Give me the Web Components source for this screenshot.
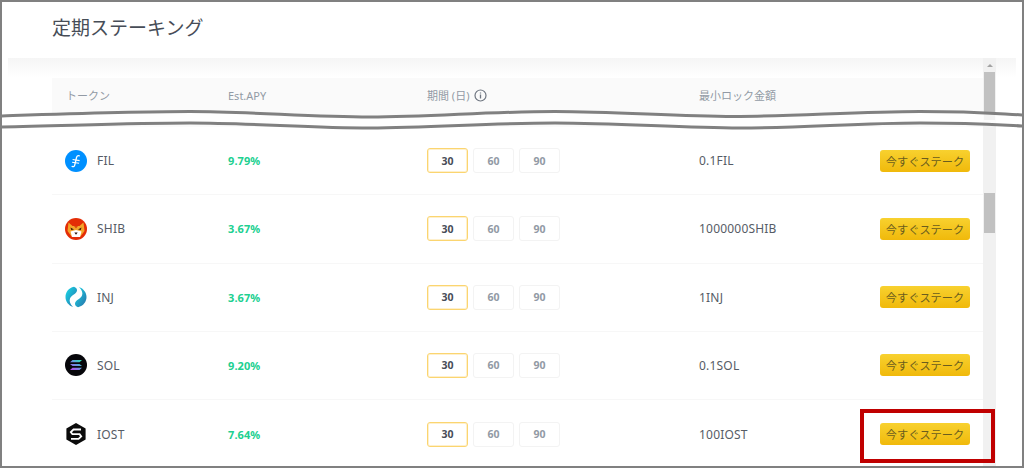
<!DOCTYPE html>
<html lang="ja">
<head>
<meta charset="utf-8">
<title>定期ステーキング</title>
<style>
  html, body { margin: 0; padding: 0; background: #fff; }
  body { width: 1024px; height: 468px; overflow: hidden; font-family: "Noto Sans", "Noto Sans CJK JP", sans-serif; }
</style>
</head>
<body>
<stake-page>
  <span slot="title">定期ステーキング</span>
  <stake-head></stake-head>
  <stake-row symbol="FIL" apy="9.79%" min="0.1FIL" icon="fil"></stake-row>
  <stake-row symbol="SHIB" apy="3.67%" min="1000000SHIB" icon="shib"></stake-row>
  <stake-row symbol="INJ" apy="3.67%" min="1INJ" icon="inj"></stake-row>
  <stake-row symbol="SOL" apy="9.20%" min="0.1SOL" icon="sol"></stake-row>
  <stake-row symbol="IOST" apy="7.64%" min="100IOST" icon="iost" last></stake-row>
</stake-page>

<script>
  const ICONS = {
    fil: `<circle cx="11" cy="11" r="11" fill="#0090ff"/>
      <path d="M14.300 5.800c-1.700-.5-2.500.4-2.900 2.200l-1.600 6.800c-.4 1.700-1.200 2.200-2.700 1.600" fill="none" stroke="#fff" stroke-width="1.300" stroke-linecap="round"/>
      <path d="M7.600 9.500l7 1.100M7.100 12.200l7 1.100" stroke="#fff" stroke-width="1.100"/>`,
    shib: `<circle cx="11" cy="11" r="11" fill="#e42d06"/>
      <path d="M3.500 4.500l4 3.500h7l4-3.500 1 8.500-4.500 6H7l-4.500-6z" fill="#f3a52b"/>
      <path d="M5.500 13.500l5.500-1.500 5.500 1.500-1.500 5.500H7z" fill="#fff"/>
      <path d="M5.500 9.500l3.500 2-2.800.6zM16.500 9.500l-3.500 2 2.800.6z" fill="#3a1a08"/>
      <path d="M9.300 14.500h3.400L11 16.800z" fill="#2a1208"/>
      <path d="M9 8h4l-2 2.500z" fill="#d8480f"/>`,
    inj: `<defs><linearGradient id="g" x1="0" y1="0" x2="1" y2="1"><stop offset="0" stop-color="#16dcea"/><stop offset="1" stop-color="#2a6fa8"/></linearGradient></defs>
      <path d="M9 .8C3.500 2 .5 6.500 .5 11S3.500 19.500 8 21C5 18 4 15 5 12.500 6.500 9 11.500 8 12 4.500 12.200 3 11 1.500 9 .8Z" fill="url(#g)"/>
      <path d="M13 21.200C18.500 20 21.500 15.500 21.500 11S18.500 2.500 14 1C17 4 18 7 17 9.500 15.500 13 10.500 14 10 17.500 9.800 19 11 20.500 13 21.200Z" fill="url(#g)"/>`,
    sol: `<defs><linearGradient id="s" x1="0" y1="1" x2="1" y2="0"><stop offset="0" stop-color="#c840f0"/><stop offset=".5" stop-color="#6a8fe0"/><stop offset="1" stop-color="#22eeb0"/></linearGradient></defs>
      <circle cx="11" cy="11" r="11" fill="#06060a"/>
      <path d="M7.500 6h9.500l-2.500 2.300H5zM5 9.900h9.500l2.500 2.200H7.500zM7.500 13.700H17l-2.500 2.300H5z" fill="url(#s)"/>`,
    iost: `<path d="M11 0l9.600 5.500v11L11 22l-9.600-5.500v-11z" fill="#0b0b0b"/>
      <path d="M16 6.500H8.500L5.800 9l1.600 2.200h7.200l1.600 2.200-2.600 2.400H6" fill="none" stroke="#fff" stroke-width="1.800"/>`
  };

  const COLS = 'grid-template-columns: 162px 199px 272px 1fr;';

  class StakePage extends HTMLElement {
    constructor() {
      super();
      this.attachShadow({ mode: 'open' });
      this.shadowRoot.innerHTML = `
        <style>
          :host { display: block; position: relative; width: 1024px; height: 468px; box-sizing: border-box; border: 2px solid #808080; overflow: hidden; background: #fff; }
          .title { height: 56px; box-sizing: border-box; padding: 13px 0 0 50px; font-size: 19px; line-height: 26px; color: #474d57; }
          .body { display: flex; margin: 0 6px; background: linear-gradient(#f5f5f5, #fff 20px); }
          .table { width: 975px; padding: 20px 0 0 0; flex: none; box-sizing: border-box; }
          .rows { margin-left: 44px; }
          .track { width: 13px; flex: none; background: #f1f1f1; display: flex; flex-direction: column; align-items: center; height: 420px; }
          .up { width: 0; height: 0; margin-top: 6px; border: 3px solid transparent; border-top: 0; border-bottom: 3px solid #a3a3a3; }
          .thumb { width: 11px; background: #c1c1c1; }
          .t1 { height: 48px; margin-top: 5px; }
          .t2 { height: 40px; margin-top: 73px; }
          .cut { position: absolute; left: -2px; top: 106px; width: 1024px; height: 22px; }
          .mark { position: absolute; left: 858px; top: 407px; width: 135px; height: 54px; box-sizing: border-box; border: 4px solid #c00000; }
        </style>
        <div class="title"><slot name="title"></slot></div>
        <div class="body">
          <div class="table"><div class="rows"><slot></slot></div></div>
          <div class="track"><div class="up"></div><div class="thumb t1"></div><div class="thumb t2"></div></div>
        </div>
        <svg class="cut" viewBox="0 0 1024 22">
          <path d="M0 8C60 6 130 3.500 190 3.500S310 9 370 9 490 3.500 555 3.500 680 9 740 8.500 860 3.500 920 3.500 1000 6 1024 7V18C1000 17 980 15 920 15S800 20 740 20 620 15 555 15 430 20 370 20 250 15 190 15 60 18 0 19Z" fill="#fff" fill-opacity=".8"/>
          <path d="M0 8C60 6 130 3.500 190 3.500S310 9 370 9 490 3.500 555 3.500 680 9 740 8.500 860 3.500 920 3.500 1000 6 1024 7" fill="none" stroke="#808080" stroke-width="3"/>
          <path d="M0 19C60 18 130 15 190 15S310 20 370 20 490 15 555 15 680 20 740 20 860 15 920 15 1000 17 1024 18" fill="none" stroke="#808080" stroke-width="3"/>
        </svg>
        <div class="mark"></div>`;
    }
  }

  class StakeHead extends HTMLElement {
    constructor() {
      super();
      this.attachShadow({ mode: 'open' });
      this.shadowRoot.innerHTML = `
        <style>
          :host { display: grid; ${COLS} height: 49px; box-sizing: border-box; padding: 10px 0 0 14px; background: #fafafa; font-size: 11px; line-height: 16px; color: #929aa5; }
          .info { display: inline-block; vertical-align: -2px; margin-left: 2px; }
        </style>
        <div>トークン</div>
        <div>Est.APY</div>
        <div>期間 (日) <svg class="info" width="13" height="13" viewBox="0 0 13 13"><circle cx="6.500" cy="6.500" r="5.500" fill="none" stroke="#6f7681" stroke-width="1.200"/><path d="M6.500 5.500v4M6.500 3.400v1.200" stroke="#6f7681" stroke-width="1.300"/></svg></div>
        <div>最小ロック金額</div>`;
    }
  }

  class StakeRow extends HTMLElement {
    constructor() {
      super();
      this.attachShadow({ mode: 'open' });
    }
    connectedCallback() {
      const icon = ICONS[this.getAttribute('icon')] || '';
      this.shadowRoot.innerHTML = `
        <style>
          :host { display: grid; grid-template-columns: 161px 199px 272px 1fr; align-items: center; height: 68.250px; box-sizing: border-box; padding-left: 13px; border-bottom: 1px solid #f7f7f7; font-size: 12px; letter-spacing: .2px; color: #565c66; }
          :host([last]) { border-bottom: 0; }
          .token { display: flex; align-items: center; gap: 10px; }
          svg { display: block; flex: none; }
          .apy { color: #20d090; font-size: 11px; font-weight: 700; padding-left: 2px; letter-spacing: .1px; }
          .days { display: flex; gap: 5px; padding-left: 2px; letter-spacing: 0; }
          .min { padding-left: 2px; }
          .right { display: flex; justify-content: space-between; align-items: center; padding-right: 13px; }
        </style>
        <div class="token"><svg width="22" height="22" viewBox="0 0 22 22">${icon}</svg><span>${this.getAttribute('symbol')}</span></div>
        <div class="apy">${this.getAttribute('apy')}</div>
        <div class="days">
          <stake-day active>30</stake-day><stake-day>60</stake-day><stake-day>90</stake-day>
        </div>
        <div class="right"><span class="min">${this.getAttribute('min')}</span><stake-button>今すぐステーク</stake-button></div>`;
    }
  }

  class StakeDay extends HTMLElement {
    constructor() {
      super();
      this.attachShadow({ mode: 'open' });
      this.shadowRoot.innerHTML = `
        <style>
          :host { display: flex; align-items: center; justify-content: center; width: 41px; height: 25px; box-sizing: border-box; border: 1px solid #f3f3f3; border-radius: 3px; font-size: 10.500px; font-weight: 700; color: #929aa5; }
          :host([active]) { border-color: #fbd570; box-shadow: inset 0 0 0 1px rgba(251, 213, 112, .35); color: #474d57; }
        </style>
        <slot></slot>`;
    }
  }

  class StakeButton extends HTMLElement {
    constructor() {
      super();
      this.attachShadow({ mode: 'open' });
      this.shadowRoot.innerHTML = `
        <style>
          :host { display: flex; align-items: center; justify-content: center; width: 90px; height: 22px; border-radius: 3px; background: linear-gradient(#f8d12f, #f0b90b); font-size: 11.200px; letter-spacing: 0; color: #6b5d1e; }
        </style>
        <slot></slot>`;
    }
  }

  customElements.define('stake-page', StakePage);
  customElements.define('stake-head', StakeHead);
  customElements.define('stake-row', StakeRow);
  customElements.define('stake-day', StakeDay);
  customElements.define('stake-button', StakeButton);
</script>
</body>
</html>
